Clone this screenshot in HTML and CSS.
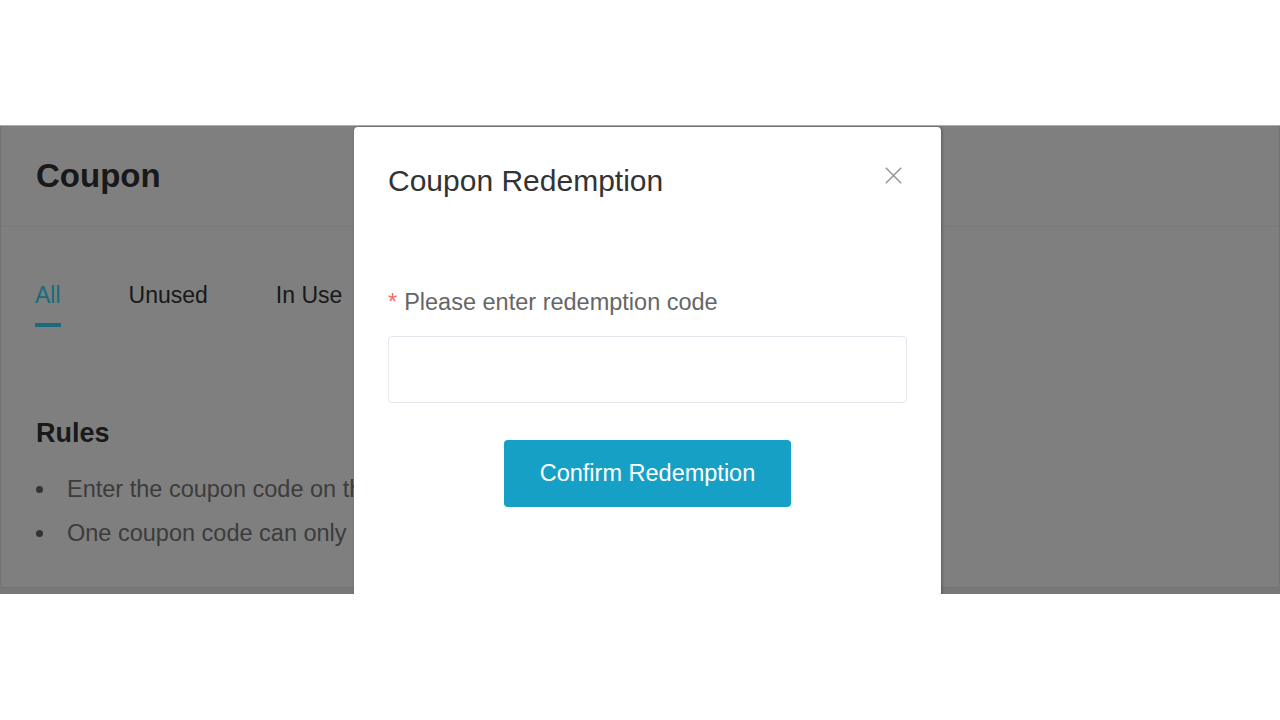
FILE: index.html
```html
<!DOCTYPE html>
<html lang="en">
<head>
<meta charset="utf-8">
<title>Coupon</title>
<link rel="stylesheet" href="styles.css">
</head>
<body>
  <div class="frame">
    <main class="page">
      <section class="card">
        <header class="card-head">
          <h1 class="card-title">Coupon</h1>
        </header>
        <div class="card-body">
          <nav class="tabs">
            <a class="tab active">All</a>
            <a class="tab">Unused</a>
            <a class="tab">In Use</a>
          </nav>
          <h2 class="rules-title">Rules</h2>
          <ul class="rules">
            <li>Enter the coupon code on this page to redeem it.</li>
            <li>One coupon code can only be used once.</li>
          </ul>
        </div>
      </section>
    </main>
    <div class="mask"></div>
    <div class="modal" role="dialog">
      <h3 class="modal-title">Coupon Redemption</h3>
      <button class="modal-close" aria-label="Close">
        <svg width="17" height="17" viewBox="0 0 17 17"><path d="M0.8 0.8 L16.2 16.2 M16.2 0.8 L0.8 16.2" stroke="#999" stroke-width="1.6" fill="none"/></svg>
      </button>
      <form class="redeem-form">
        <label class="field-label" for="code"><span class="req">*</span><span class="label-text">Please enter redemption code</span></label>
        <input class="field-input" id="code" type="text">
        <button type="button" class="btn-primary">Confirm Redemption</button>
      </form>
    </div>
  </div>
</body>
</html>
```
FILE: styles.css
```css
html, body {
  margin: 0;
  padding: 0;
  background: #fff;
  font-family: "Liberation Sans", Arial, sans-serif;
}

.frame {
  position: relative;
  margin-top: 125px;
  height: 468px;
  border-top: 1px solid #adadad;
  overflow: hidden;
  background: #f0f0f0;
}

.page {
  padding: 0;
}

.card {
  background: #fff;
  border: 1px solid #e6e6e6;
  border-top: none;
  border-radius: 0 0 4px 4px;
}

.card-head {
  padding: 30px 35px;
  border-bottom: 1px solid #f0f0f0;
}

.card-title {
  margin: 0;
  font-size: 33px;
  line-height: 40px;
  font-weight: bold;
  color: #333;
}

.card-body {
  padding: 54px 35px 32px;
}

.tabs {
  display: flex;
  gap: 68px;
  margin-left: -1px;
}

.tab {
  position: relative;
  font-size: 23px;
  line-height: 28px;
  padding-bottom: 18px;
  color: #333;
  cursor: pointer;
}

.tab.active {
  color: #36d6fa;
}

.tab.active::after {
  content: "";
  position: absolute;
  left: 0;
  right: 0;
  bottom: 0;
  height: 4px;
  background: #36d6fa;
}

.rules-title {
  margin: 90px 0 0;
  font-size: 27px;
  line-height: 32px;
  font-weight: bold;
  color: #333;
}

.rules {
  list-style: none;
  margin: 18px 0 0;
  padding: 0;
}

.rules li {
  display: flex;
  align-items: center;
  font-size: 23.5px;
  line-height: 44px;
  color: #787878;
}

.rules li::before {
  content: "";
  width: 7px;
  height: 7px;
  border-radius: 50%;
  background: #666;
  margin-right: 24px;
  flex: none;
}

.mask {
  position: absolute;
  inset: 0;
  background: rgba(0, 0, 0, 0.5);
}

.modal {
  position: absolute;
  left: 354px;
  top: 1px;
  width: 587px;
  height: 520px;
  box-sizing: border-box;
  padding: 37px 34px 40px;
  background: #fff;
  border-radius: 4px;
  box-shadow: 1px 0 3px rgba(0, 0, 0, 0.3);
}

.modal-title {
  margin: 0;
  font-size: 30px;
  line-height: 34px;
  font-weight: normal;
  color: #333;
}

.modal-close {
  position: absolute;
  top: 40px;
  right: 39px;
  width: 17px;
  height: 17px;
  padding: 0;
  border: none;
  background: none;
  cursor: pointer;
  display: block;
}

.modal-close svg {
  display: block;
}

.redeem-form {
  margin-top: 90px;
  display: flex;
  flex-direction: column;
}

.field-label {
  display: flex;
  gap: 7px;
  font-size: 23.5px;
  line-height: 28px;
  color: #666;
}

.req {
  color: #f56c6c;
}

.field-input {
  margin-top: 20px;
  height: 67px;
  width: 100%;
  box-sizing: border-box;
  border: 1px solid #e4e7ed;
  border-radius: 4px;
  padding: 0 15px;
  font-family: inherit;
  font-size: 20px;
  outline: none;
}

.btn-primary {
  align-self: center;
  margin-top: 37px;
  width: 287px;
  height: 67px;
  border: none;
  border-radius: 4px;
  background: #17a0c6;
  color: #fff;
  font-family: inherit;
  font-size: 23.5px;
  cursor: pointer;
}
```
